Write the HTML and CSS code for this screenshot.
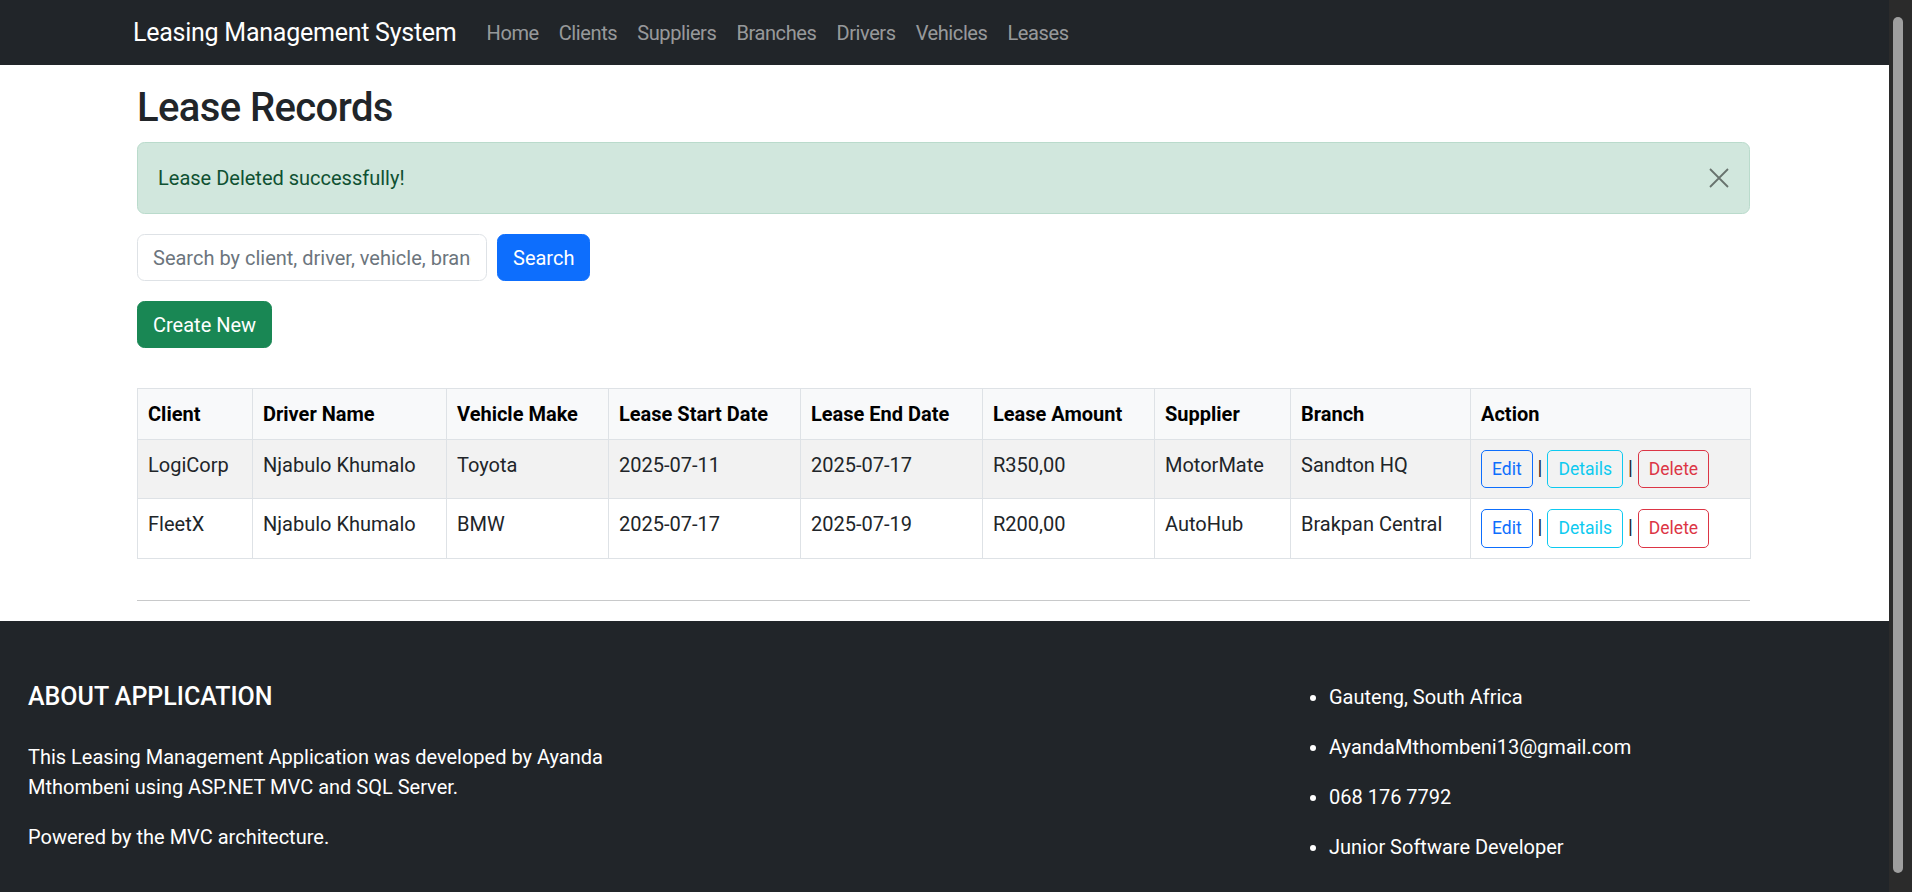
FILE: index.html
```html
<!DOCTYPE html>
<html lang="en">
<head>
<meta charset="utf-8">
<title>Lease Records - Leasing Management System</title>
<link rel="stylesheet" href="styles.css">
</head>
<body>
<div class="screen">
  <div class="page">
    <header class="navbar">
      <a class="brand" href="#">Leasing Management System</a>
      <ul class="nav">
        <li><a href="#">Home</a></li>
        <li><a href="#">Clients</a></li>
        <li><a href="#">Suppliers</a></li>
        <li><a href="#">Branches</a></li>
        <li><a href="#">Drivers</a></li>
        <li><a href="#">Vehicles</a></li>
        <li><a href="#">Leases</a></li>
      </ul>
    </header>

    <main class="container">
      <h2 class="title">Lease Records</h2>

      <div class="alert">
        <span>Lease Deleted successfully!</span>
        <button class="btn-close" type="button" aria-label="Close">
          <svg viewBox="0 0 20 20" width="20" height="20"><path d="M1 1 L19 19 M19 1 L1 19" stroke="#000" stroke-width="1.8" fill="none"/></svg>
        </button>
      </div>

      <form class="search">
        <input class="search-input" type="text" placeholder="Search by client, driver, vehicle, branch...">
        <button class="btn btn-primary" type="button">Search</button>
      </form>

      <div class="create-row">
        <a class="btn btn-success" href="#">Create New</a>
      </div>

      <table class="table">
        <colgroup>
          <col class="w-client"><col class="w-driver"><col class="w-vehicle"><col class="w-start"><col class="w-end"><col class="w-amount"><col class="w-supplier"><col class="w-branch"><col class="w-action">
        </colgroup>
        <thead>
          <tr>
            <th>Client</th><th>Driver Name</th><th>Vehicle Make</th><th>Lease Start Date</th><th>Lease End Date</th><th>Lease Amount</th><th>Supplier</th><th>Branch</th><th>Action</th>
          </tr>
        </thead>
        <tbody>
          <tr>
            <td>LogiCorp</td><td>Njabulo Khumalo</td><td>Toyota</td><td>2025-07-11</td><td>2025-07-17</td><td>R350,00</td><td>MotorMate</td><td>Sandton HQ</td>
            <td><a class="btn-sm btn-outline-primary" href="#">Edit</a> | <a class="btn-sm btn-outline-info" href="#">Details</a> | <a class="btn-sm btn-outline-danger" href="#">Delete</a></td>
          </tr>
          <tr>
            <td>FleetX</td><td>Njabulo Khumalo</td><td>BMW</td><td>2025-07-17</td><td>2025-07-19</td><td>R200,00</td><td>AutoHub</td><td>Brakpan Central</td>
            <td><a class="btn-sm btn-outline-primary" href="#">Edit</a> | <a class="btn-sm btn-outline-info" href="#">Details</a> | <a class="btn-sm btn-outline-danger" href="#">Delete</a></td>
          </tr>
        </tbody>
      </table>

      <hr class="divider">
    </main>

    <footer class="footer">
      <div class="about">
        <h5 class="footer-title">ABOUT APPLICATION</h5>
        <p>This Leasing Management Application was developed by Ayanda Mthombeni using ASP.NET MVC and SQL Server.</p>
        <p>Powered by the MVC architecture.</p>
      </div>
      <div class="spacer"></div>
      <div class="contact">
        <ul>
          <li>Gauteng, South Africa</li>
          <li>AyandaMthombeni13@gmail.com</li>
          <li>068 176 7792</li>
          <li>Junior Software Developer</li>
        </ul>
      </div>
    </footer>
  </div>
  <div class="scrollbar"><div class="thumb"></div></div>
</div>
</body>
</html>
```

FILE: styles.css
```css
html, body {
  margin: 0;
  height: 100%;
}

body {
  font-family: Roboto, "Liberation Sans", Arial, sans-serif;
  font-size: 20px;
  line-height: 1.5;
  color: #212529;
  background: #fff;
}

.screen {
  display: flex;
  height: 100vh;
  overflow: hidden;
}

.page {
  flex: 1;
  min-width: 0;
  overflow: hidden;
}

/* fake classic scrollbar */
.scrollbar {
  flex: none;
  width: 23px;
  box-sizing: border-box;
  background: #2b2b2b;
  padding: 17px 9px 19px 4px;
  display: flex;
}

.thumb {
  width: 10px;
  height: 856px;
  background: #9f9f9f;
  border-radius: 5px;
}

/* navbar */
.navbar {
  height: 65px;
  background: #212529;
  display: flex;
  align-items: center;
  padding-left: 133px;
}

.brand {
  font-size: 25px;
  line-height: 37.5px;
  letter-spacing: -0.25px;
  color: #fff;
  text-decoration: none;
  margin-right: 20px;
}

.nav {
  display: flex;
  list-style: none;
  margin: 0;
  padding: 0;
}

.nav a {
  display: block;
  padding: 0 10px;
  color: rgba(255, 255, 255, 0.55);
  text-decoration: none;
  line-height: 30px;
  letter-spacing: -0.4px;
}

/* main */
.container {
  width: 1613px;
  margin-left: 137px;
  padding-top: 19px;
}

.title {
  font-size: 40px;
  line-height: 48px;
  font-weight: 500;
  letter-spacing: -0.6px;
  margin: 0 0 10px;
}

.alert {
  display: flex;
  align-items: center;
  justify-content: space-between;
  padding: 20px;
  border: 1px solid #badbcc;
  border-radius: 7.5px;
  background: #d1e7dd;
  color: #0f5132;
  line-height: 30px;
  margin-bottom: 20px;
}

.btn-close {
  width: 20px;
  height: 20px;
  padding: 0;
  border: 0;
  background: none;
  opacity: 0.5;
  display: flex;
}

.search {
  display: flex;
  gap: 10px;
  margin: 0 0 20px;
}

.search-input {
  width: 350px;
  height: 47px;
  box-sizing: border-box;
  padding: 7.5px 15px;
  font: inherit;
  color: #212529;
  border: 1px solid #dee2e6;
  border-radius: 7.5px;
  outline: none;
}

.search-input::placeholder {
  color: #6c757d;
}

.btn {
  display: inline-block;
  font: inherit;
  line-height: 30px;
  padding: 7.5px 15px;
  border: 1px solid transparent;
  border-radius: 7.5px;
  text-decoration: none;
  cursor: pointer;
}

.btn-primary {
  background: #0d6efd;
  border-color: #0d6efd;
  color: #fff;
}

.btn-success {
  background: #198754;
  border-color: #198754;
  color: #fff;
}

.create-row {
  margin-bottom: 40px;
}

/* table */
.table {
  width: 1613px;
  border-collapse: collapse;
  table-layout: fixed;
}

.w-client { width: 115px; }
.w-driver { width: 194px; }
.w-vehicle { width: 162px; }
.w-start { width: 192px; }
.w-end { width: 182px; }
.w-amount { width: 172px; }
.w-supplier { width: 136px; }
.w-branch { width: 180px; }
.w-action { width: 280px; }

.table th,
.table td {
  border: 1px solid #dee2e6;
  padding: 10px;
  text-align: left;
  vertical-align: top;
  white-space: nowrap;
}

.table thead th {
  background: #f8f9fa;
  color: #000;
  font-weight: 700;
}

.table tbody tr:nth-child(odd) td {
  background: #f2f2f2;
}

.btn-sm {
  display: inline-block;
  font-size: 17.5px;
  line-height: 26.25px;
  padding: 5px 10px;
  border: 1px solid;
  border-radius: 5px;
  text-decoration: none;
}

.btn-outline-primary { color: #0d6efd; border-color: #0d6efd; }
.btn-outline-info { color: #0dcaf0; border-color: #0dcaf0; }
.btn-outline-danger { color: #dc3545; border-color: #dc3545; }

.divider {
  margin: 41px 0 20px;
  height: 0;
  border: 0;
  border-top: 1px solid #c8c9ca;
}

/* footer */
.footer {
  background: #212529;
  color: #fff;
  padding: 61px 28px 40px;
  display: grid;
  grid-template-columns: 600px 1fr 572px;
}

.footer-title {
  font-size: 25px;
  line-height: 30px;
  font-weight: 500;
  margin: 0 0 30px;
}

.footer p {
  margin: 0 0 20px;
}

.footer ul {
  margin: 0;
  padding-left: 40px;
}

.footer li {
  margin-bottom: 20px;
}
```
